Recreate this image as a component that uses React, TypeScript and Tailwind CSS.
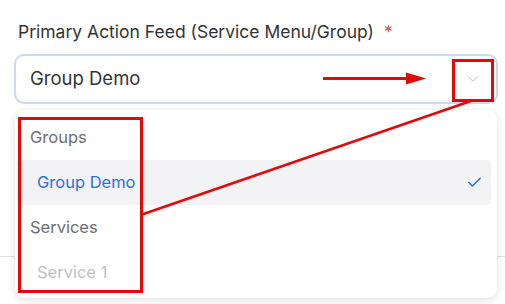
import { Check, ChevronDown } from 'lucide-react';

const groups = [{ label: 'Group Demo', selected: true }];
const services = [{ label: 'Service 1', disabled: true }];

function Annotations() {
  return (
    <svg className="pointer-events-none absolute inset-0 z-20 h-full w-full" viewBox="0 0 505 304">
      <line x1="323" y1="78.5" x2="410" y2="78.5" stroke="#e10a0a" strokeWidth="3" />
      <polygon points="406,72.5 426,78.5 406,84.5" fill="#e10a0a" />
      <rect x="453.5" y="60.5" width="39" height="40" fill="none" stroke="#e10a0a" strokeWidth="3" />
      <rect x="19.5" y="118.5" width="122" height="173" fill="none" stroke="#e10a0a" strokeWidth="3" />
      <line x1="142" y1="214.5" x2="471" y2="101" stroke="#e10a0a" strokeWidth="2.5" />
    </svg>
  );
}

export default function App() {
  return (
    <div className="relative h-[304px] w-[505px] overflow-hidden bg-white font-['Inter',sans-serif]">
      <div className="px-[14px] pt-[20px]">
        <label className="block pl-[4px] text-[17.5px] leading-[24px] text-[#333]">
          Primary Action Feed (Service Menu/Group)
          <span className="ml-[10px] text-[#e5484d]">*</span>
        </label>
        <div className="relative mt-[10px]">
          <button
            type="button"
            className="flex h-[50px] w-[484px] items-center justify-between rounded-[10px] border-2 border-[#cdd8f1] bg-white pl-[14px] pr-[14px] text-left shadow-[inset_0_-2px_3px_rgba(0,0,0,0.04)]"
          >
            <span className="text-[18.5px] text-[#333]">Group Demo</span>
            <ChevronDown className="h-[18px] w-[18px] text-[#b4b8be]" strokeWidth={1.2} />
          </button>
          <div className="absolute left-[1px] top-[56px] z-10 w-[482px] rounded-[10px] bg-white px-[6px] pb-[3px] pt-[5px] shadow-[0_2px_10px_rgba(0,0,0,0.12)]">
            <div className="flex h-[45px] items-center pl-[9px] text-[16.5px] text-[#6b6f76]">Groups</div>
            {groups.map((g) => (
              <div
                key={g.label}
                className={`flex h-[45px] items-center justify-between rounded-[4px] pl-[16px] pr-[8px] text-[16.5px] ${g.selected ? 'bg-[#f3f3f6] text-[#2f6fde]' : 'text-[#333]'}`}
              >
                {g.label}
                {g.selected && <Check className="h-[17px] w-[17px] text-[#2f6fde]" strokeWidth={2.2} />}
              </div>
            ))}
            <div className="flex h-[45px] items-center pl-[9px] text-[16.5px] text-[#6b6f76]">Services</div>
            {services.map((s) => (
              <div
                key={s.label}
                className={`flex h-[45px] items-center pl-[16px] text-[16.5px] ${s.disabled ? 'text-[#c2c2c2]' : 'text-[#333]'}`}
              >
                {s.label}
              </div>
            ))}
          </div>
        </div>
      </div>
      <div className="mt-[152px] border-t border-[#e2e2e2]" />
      <Annotations />
    </div>
  );
}
